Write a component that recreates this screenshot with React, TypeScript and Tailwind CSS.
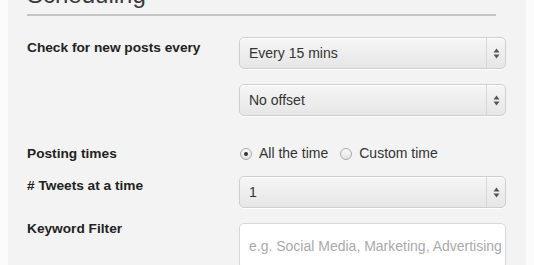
import React from 'react';

const font = { fontFamily: '"Liberation Sans", Arial, sans-serif' };

const Arrows = () => (
    <svg width="7" height="11" viewBox="0 0 7 11" className="block">
        <path d="M3.5 0.5 L6.5 4.5 H0.5 Z" fill="#555" />
        <path d="M3.5 10.5 L6.5 6.5 H0.5 Z" fill="#555" />
    </svg>
);

const Select = ({ value }: { value: string }) => (
    <div className="w-[267px] h-[32px] shrink-0 flex rounded-[5px] border border-[#cfcfcf] bg-gradient-to-b from-[#f6f6f6] to-[#e6e6e6] shadow-[0_1px_0_rgba(255,255,255,0.9),inset_0_1px_0_#fff]">
        <div className="flex-1 flex items-center pl-[9px] text-[14px] text-[#333]">{value}</div>
        <div className="w-[19px] border-l border-[#d6d6d6] flex items-center justify-center">
            <Arrows />
        </div>
    </div>
);

const Radio = ({ checked, label }: { checked?: boolean; label: string }) => (
    <label className="flex items-center gap-[7px]">
        <span className="w-[12px] h-[12px] rounded-full border border-[#a9a9a9] bg-gradient-to-b from-[#fdfdfd] to-[#e2e2e2] flex items-center justify-center">
            {checked && <span className="w-[4px] h-[4px] rounded-full bg-[#333]" />}
        </span>
        <span className="text-[14px] text-[#333]">{label}</span>
    </label>
);

const labelCls = 'w-[212px] shrink-0 text-[13.7px] font-bold text-[#222] leading-[16px]';

export default function App() {
    return (
        <div className="w-[534px] h-[265px] overflow-hidden bg-[#fbfbfb]" style={font}>
            <div className="flow-root ml-[8px] w-[518px] h-full bg-[#f3f3f3] pl-[19px] pr-[30px]">
                {/* Heading */}
                <h2 className="mt-[-19px] text-[24px] leading-[28px] text-[#3a3a3a] border-b-2 border-[#c4c4c4] pb-[5px]">Scheduling</h2>

                <div className="flex mt-[21px]">
                    <div className={`${labelCls} pt-[3px]`}>Check for new posts every</div>
                    <Select value="Every 15 mins" />
                </div>

                <div className="flex mt-[15px]">
                    <div className="w-[212px] shrink-0" />
                    <Select value="No offset" />
                </div>

                <div className="flex items-center mt-[27px]">
                    <div className={labelCls}>Posting times</div>
                    <div className="flex items-center gap-[12px] pl-[1px]">
                        <Radio checked label="All the time" />
                        <Radio label="Custom time" />
                    </div>
                </div>

                <div className="flex mt-[12px]">
                    <div className={`${labelCls} pt-[2px]`}>#&nbsp;Tweets at a time</div>
                    <Select value="1" />
                </div>

                <div className="flex mt-[15px]">
                    <div className={`${labelCls} -mt-[2px]`}>Keyword Filter</div>
                    <div className="w-[267px] shrink-0 h-[46px] rounded-[5px] border border-[#d8d8d8] bg-white flex items-center pl-[9px] pt-[1px] text-[14px] text-[#aaa] whitespace-nowrap overflow-hidden">
                        e.g. Social Media, Marketing, Advertising
                    </div>
                </div>
            </div>
        </div>
    );
}
